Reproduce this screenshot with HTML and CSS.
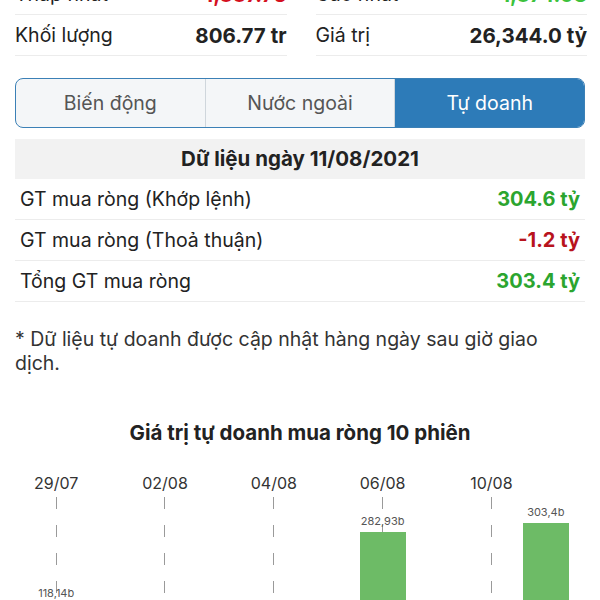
FILE: index.html
```html
<!DOCTYPE html>
<html>
<head>
  <title>Tự doanh</title>
  <link rel="stylesheet" href="styles.css">
</head>
<body>

  <div class="stats">
    <div class="stat-row"><span>Thấp nhất</span><b class="down">1,337.75</b></div>
    <div class="stat-row"><span>Cao nhất</span><b class="up">1,374.08</b></div>
    <div class="stat-row"><span>Khối lượng</span><b>806.77 tr</b></div>
    <div class="stat-row"><span>Giá trị</span><b>26,344.0 tỷ</b></div>
  </div>

  <div class="tabs">
    <div class="tab">Biến động</div>
    <div class="tab">Nước ngoài</div>
    <div class="tab active">Tự doanh</div>
  </div>

  <div class="day-head">Dữ liệu ngày 11/08/2021</div>
  <div class="net-row"><span>GT mua ròng (Khớp lệnh)</span><b class="up">304.6 tỷ</b></div>
  <div class="net-row"><span>GT mua ròng (Thoả thuận)</span><b class="down">-1.2 tỷ</b></div>
  <div class="net-row"><span>Tổng GT mua ròng</span><b class="up">303.4 tỷ</b></div>

  <p class="note">* Dữ liệu tự doanh được cập nhật hàng ngày sau giờ giao dịch.</p>

  <h2 class="chart-title">Giá trị tự doanh mua ròng 10 phiên</h2>
  <div class="chart" id="chart"></div>

  <script>
    const sessions = [
      ['29/07', 118.14], ['30/07', 41.2], ['02/08', -58.6], ['03/08', 22.75], ['04/08', -16.3],
      ['05/08', 54.1], ['06/08', 282.93], ['09/08', 61.6], ['10/08', -35.7], ['11/08', 303.4]
    ];
    const scale = 0.44; // px per tỷ
    const chart = document.getElementById('chart');

    sessions.forEach(([day, value], i) => {
      const col = document.createElement('div');
      col.className = 'col' + (i % 2 === 0 ? ' grid' : '');

      const label = document.createElement('div');
      label.className = 'day';
      label.textContent = i % 2 === 0 ? day : '';
      col.appendChild(label);

      const pos = document.createElement('div');
      pos.className = 'plot pos';
      const neg = document.createElement('div');
      neg.className = 'plot neg';

      const text = document.createElement('div');
      text.className = 'val';
      text.textContent = value.toString().replace('.', ',') + 'b';
      const bar = document.createElement('div');
      bar.className = 'bar ' + (value >= 0 ? 'green' : 'red');
      bar.style.height = Math.abs(value * scale) + 'px';

      if (value >= 0) {
        pos.appendChild(text);
        pos.appendChild(bar);
      } else {
        neg.appendChild(bar);
        neg.appendChild(text);
      }
      col.appendChild(pos);
      col.appendChild(neg);
      chart.appendChild(col);
    });
  </script>

</body>
</html>
```

FILE: styles.css
```css
body {
  margin: 0;
  font-family: Inter, "Noto Sans", sans-serif;
  color: #222;
  background: #fff;
  overflow: hidden;
}
.stats {
  display: grid;
  grid-template-columns: 1fr 1fr;
  column-gap: 29px;
  padding: 0 13px 0 15px;
  margin-top: -26px;
}
.stat-row {
  display: flex;
  justify-content: space-between;
  align-items: center;
  height: 40px;
  border-bottom: 1px solid #ececec;
  font-size: 19.5px;
}
.stat-row b {
  font-size: 20.5px;
  font-weight: 700;
}
.up {
  color: #2ba52f;
}
.down {
  color: #b8131d;
}
.stats .up {
  color: #3cc23c;
}
.stats .down {
  color: #d4101e;
}
.tabs {
  display: flex;
  margin: 22px 15px 0;
  height: 48px;
  border: 1.5px solid #3b80b6;
  border-radius: 8px;
  overflow: hidden;
  background: #f4f6f8;
}
.tab {
  flex: 1;
  display: flex;
  justify-content: center;
  align-items: center;
  font-size: 19.5px;
  color: #555;
  border-right: 1px solid #cfd6dc;
}
.tab:last-child {
  border-right: none;
}
.tab.active {
  background: #2d7bb8;
  color: #fff;
}
.day-head {
  margin: 11px 15px 0;
  height: 40px;
  line-height: 40px;
  background: #f2f2f2;
  text-align: center;
  font-size: 20.5px;
  font-weight: 700;
}
.net-row {
  display: flex;
  justify-content: space-between;
  align-items: center;
  height: 40px;
  margin: 0 15px;
  padding: 0 5px;
  border-bottom: 1px solid #ececec;
  font-size: 19.5px;
}
.net-row b {
  font-size: 20px;
  font-weight: 700;
}
.note {
  margin: 25px 32px 0 15px;
  font-size: 19.5px;
  line-height: 24px;
  color: #333;
}
.chart-title {
  margin: 45px 0 0;
  text-align: center;
  font-size: 20.5px;
  font-weight: 700;
}
.chart {
  display: grid;
  grid-template-columns: repeat(10, 1fr);
  padding: 0 27px 0 29px;
  margin-top: 28px;
}
.col {
  display: flex;
  flex-direction: column;
}
.col.grid .plot {
  background-image: repeating-linear-gradient(to bottom, #9a9a9a 0 12px, transparent 12px 28px);
  background-size: 1px 100%;
  background-position: center top;
  background-repeat: no-repeat;
}
.day {
  height: 20px;
  font-size: 16px;
  line-height: 20px;
  color: #333;
  text-align: center;
  white-space: nowrap;
}
.plot {
  display: flex;
  flex-direction: column;
  align-items: center;
}
.pos {
  margin-top: 4px;
  height: 159px;
  justify-content: flex-end;
}
.neg {
  height: 60px;
}
.val {
  font-size: 11px;
  color: #555;
  margin: 4px 0;
  white-space: nowrap;
}
.bar {
  width: 46px;
}
.bar.green {
  background: #6dbb66;
}
.bar.red {
  background: #d9534f;
}
```
